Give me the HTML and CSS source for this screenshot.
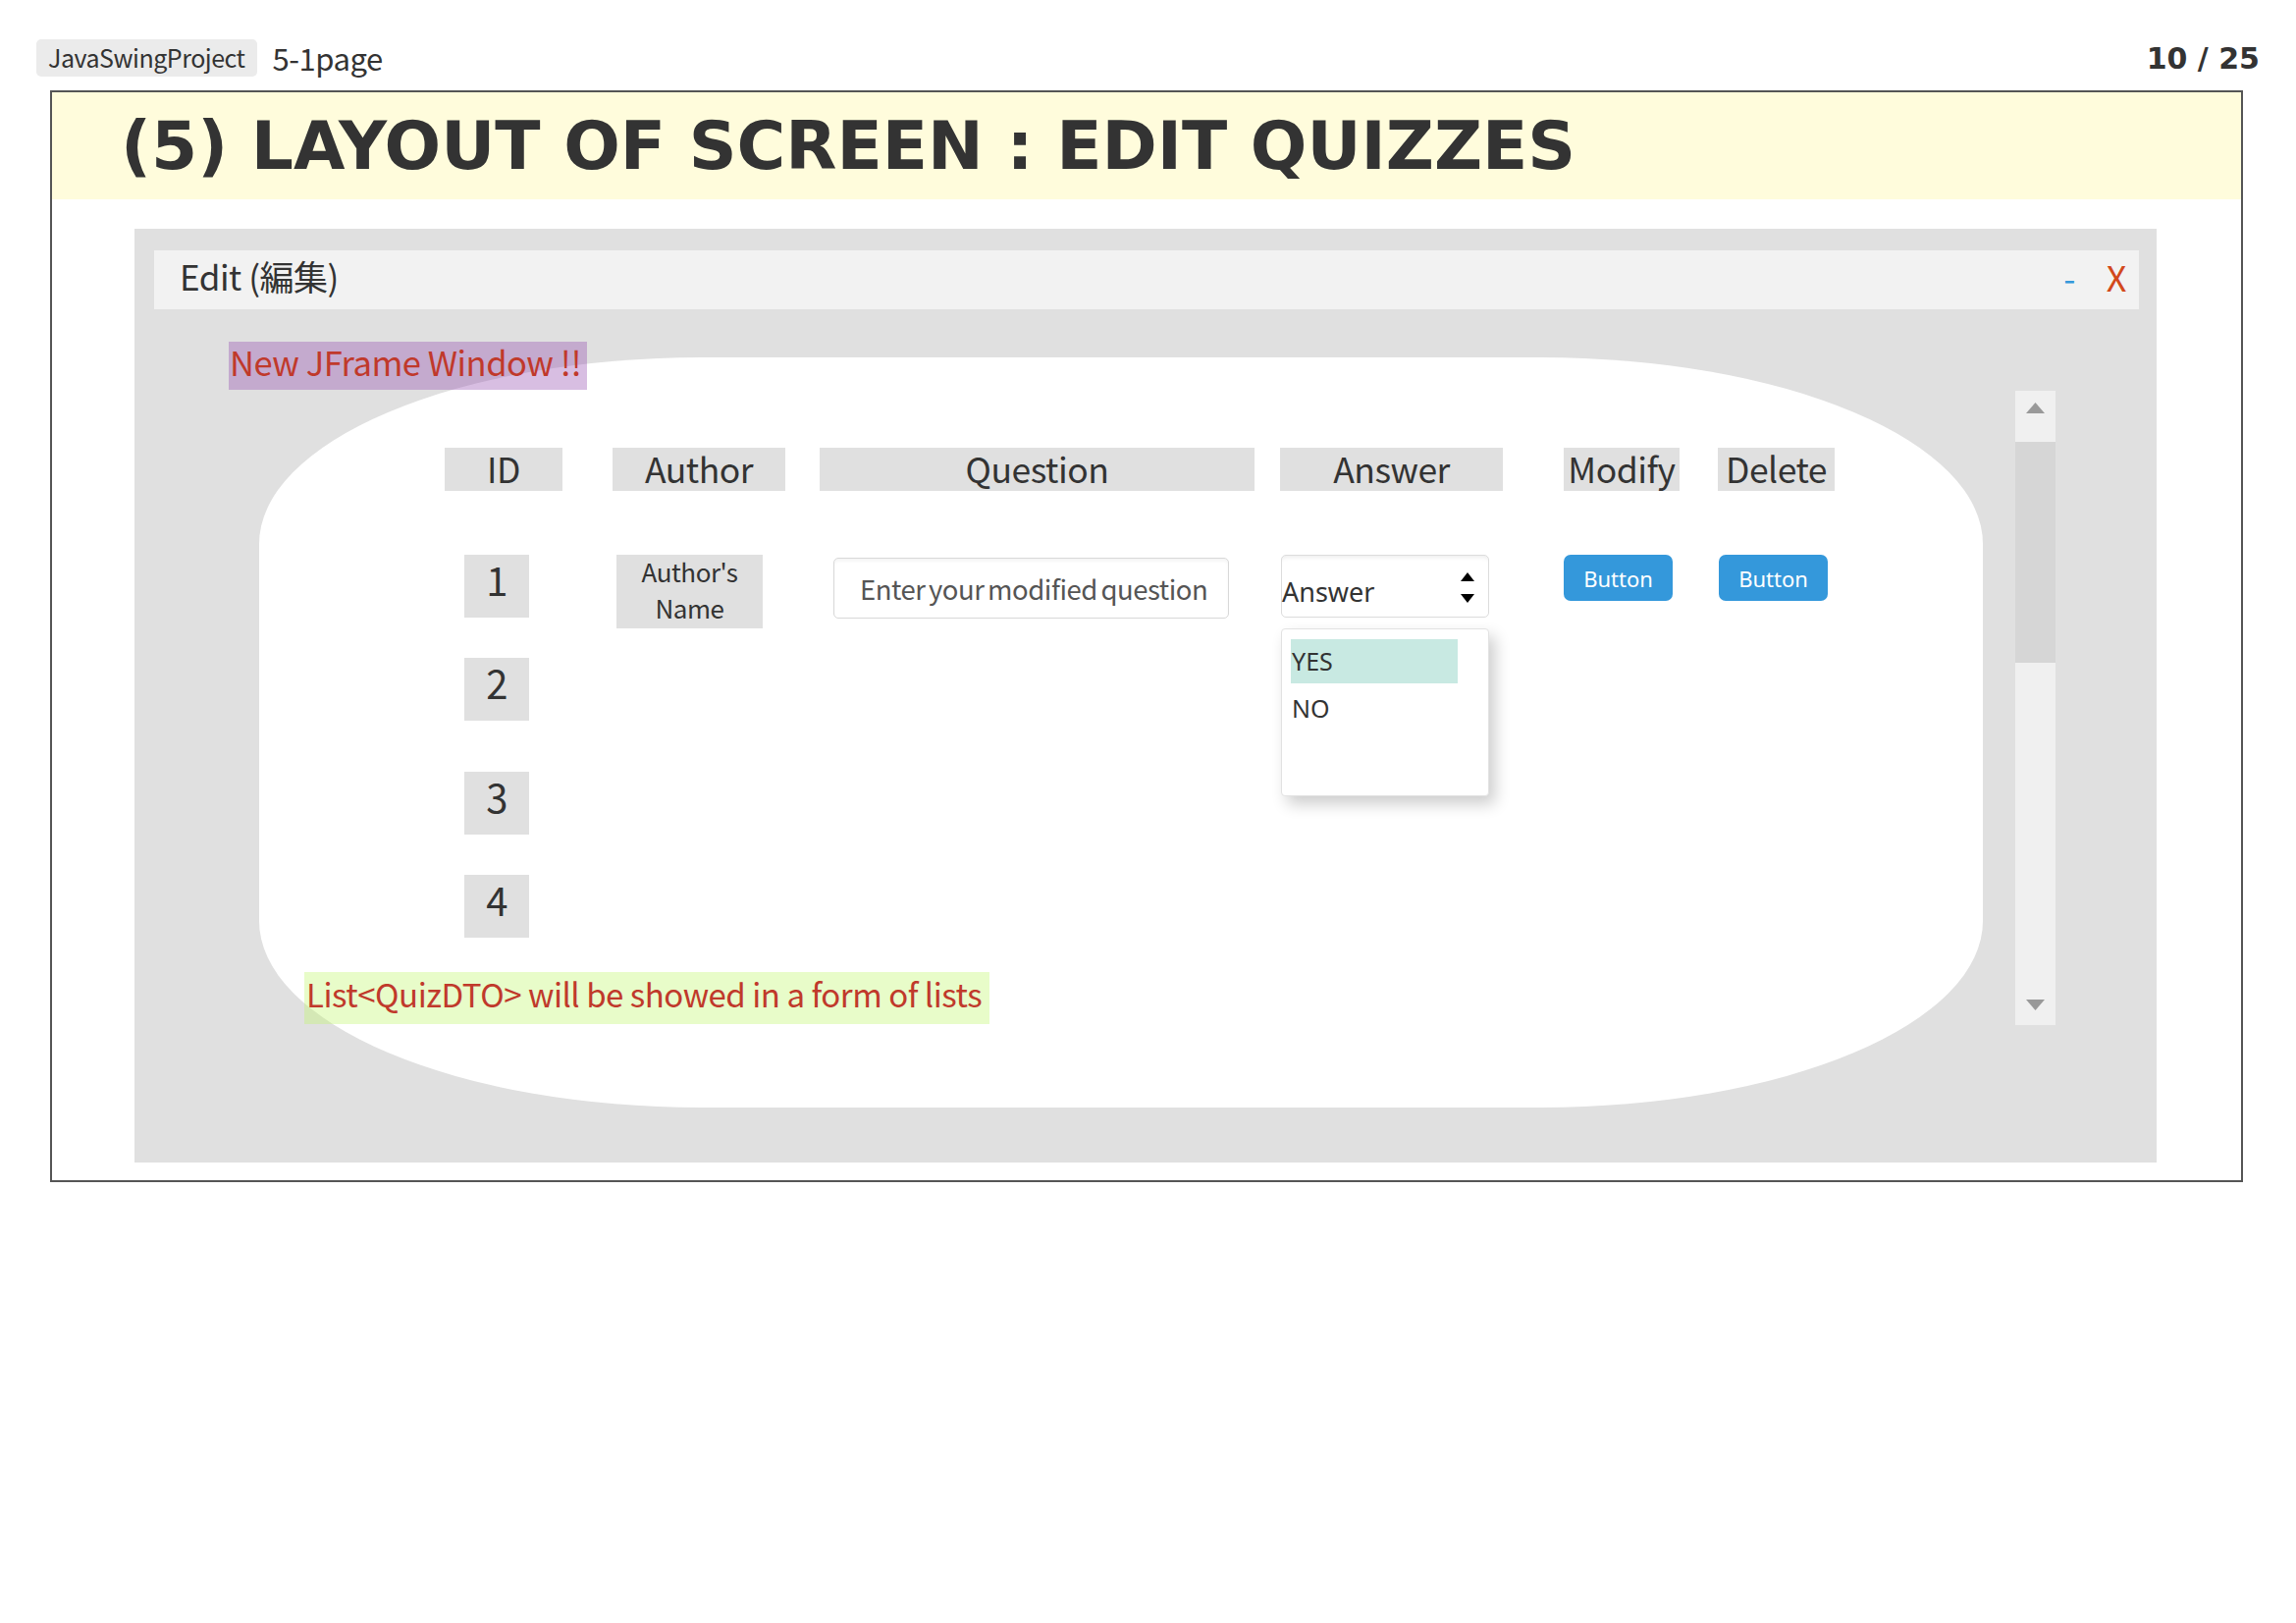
FILE: index.html
```html
<!DOCTYPE html>
<html lang="en">
<head>
    <meta charset="UTF-8">
    <meta name="viewport" content="width=device-width, initial-scale=1.0">
    <title>JavaSwingProject - 5-1page</title>
    <link rel="stylesheet" href="styles.css">
</head>
<body>

<div class="page">
    <header class="topbar">
        <div class="crumbs">
            <span class="tag">JavaSwingProject</span>
            <span class="pagename">5-1page</span>
        </div>
        <div class="pager">10 / 25</div>
    </header>

    <section class="slide">
        <h1 class="slide-title">(5) LAYOUT OF SCREEN : EDIT QUIZZES</h1>

        <div class="frame">
            <div class="titlebar">
                <span>Edit (編集)</span>
                <span class="win-btns"><span class="min">-</span><span class="close">X</span></span>
            </div>

            <div class="frame-body">
                <span class="note note-purple">New JFrame Window !!</span>

                <div class="sheet">
                    <div class="grid">
                        <div class="head head-id">ID</div>
                        <div class="head head-author">Author</div>
                        <div class="head head-question">Question</div>
                        <div class="head head-answer">Answer</div>
                        <div class="head head-modify">Modify</div>
                        <div class="head head-delete">Delete</div>

                        <div class="id-cell">1</div>
                        <div class="author-cell"><span>Author's</span><span>Name</span></div>
                        <input type="text" class="question-input" placeholder="Enter your modified question">
                        <div class="answer-cell">
                            <div class="select">
                                <span class="select-value">Answer</span>
                                <svg class="select-arrows" width="14" height="31" viewBox="0 0 14 31">
                                    <path d="M7 0L14 9H0Z" fill="#000"/>
                                    <path d="M0 22H14L7 31Z" fill="#000"/>
                                </svg>
                            </div>
                            <div class="options">
                                <div class="option selected">YES</div>
                                <div class="option">NO</div>
                            </div>
                        </div>
                        <button class="btn">Button</button>
                        <button class="btn btn-delete">Button</button>

                        <div class="id-cell">2</div>
                        <div class="id-cell">3</div>
                        <div class="id-cell">4</div>
                    </div>
                </div>

                <div class="scrollbar">
                    <div class="scroll-btn">
                        <svg width="19" height="11" viewBox="0 0 19 11"><path d="M9.5 0L19 11H0Z" fill="#999"/></svg>
                    </div>
                    <div class="thumb"></div>
                    <div class="track">
                        <svg width="19" height="11" viewBox="0 0 19 11"><path d="M0 0H19L9.5 11Z" fill="#999"/></svg>
                    </div>
                </div>

                <span class="note note-green">List&lt;QuizDTO&gt; will be showed in a form of lists</span>
            </div>
        </div>
    </section>
</div>

</body>
</html>
```

FILE: styles.css
```css
body {
    margin: 0;
    font-family: "Noto Sans CJK JP", "Noto Sans", sans-serif;
    letter-spacing: -0.03em;
    color: #333;
    background-color: #fff;
}
.page {
    padding: 40px 37px 0 37px;
}
.topbar {
    display: flex;
    justify-content: space-between;
    align-items: center;
    height: 38px;
}
.crumbs {
    display: flex;
    align-items: center;
}
.tag {
    background-color: #ebebeb;
    border-radius: 5px;
    padding: 0 12px;
    height: 38px;
    line-height: 36px;
    font-size: 25px;
}
.pagename {
    margin-left: 16px;
    font-size: 31px;
    line-height: 34px;
}
.pager {
    font-family: "DejaVu Sans", sans-serif;
    font-weight: bold;
    font-size: 30px;
    letter-spacing: normal;
}
.slide {
    margin: 14px 17px 0 14px;
    border: 2px solid #555;
}
.slide-title {
    margin: 0;
    height: 109px;
    line-height: 109px;
    background-color: #fffcdc;
    padding-left: 70px;
    font-family: "DejaVu Sans", sans-serif;
    font-weight: bold;
    font-size: 67.8px;
    letter-spacing: normal;
    color: #333;
    white-space: nowrap;
}
.frame {
    margin: 30px 86px 18px 84px;
    background-color: #e0e0e0;
    padding: 22px 18px 0 20px;
}
.titlebar {
    height: 60px;
    box-sizing: border-box;
    background-color: #f2f2f2;
    display: flex;
    align-items: center;
    justify-content: space-between;
    padding: 0 13px 8px 26px;
    font-size: 35px;
    line-height: 52px;
}
.win-btns .min {
    color: #3498db;
    margin-right: 32px;
}
.win-btns .close {
    color: #d2491b;
    font-size: 36px;
}
.frame-body {
    position: relative;
    display: flex;
    align-items: flex-start;
    padding: 49px 0 56px 107px;
}
.sheet {
    width: 1756px;
    height: 764px;
    box-sizing: border-box;
    background-color: #fff;
    border-radius: 450px / 190px;
    padding: 92px 0 0 189px;
}
.grid {
    display: grid;
    grid-template-columns: 171px 211px 469px 289px 157px 119px;
    grid-template-rows: 109px 105px 116px 105px 64px;
    align-items: start;
}
.head {
    height: 44px;
    line-height: 42px;
    background-color: #e0e0e0;
    text-align: center;
    font-size: 35.5px;
}
.head-id { width: 120px; }
.head-author { width: 176px; }
.head-question { width: 443px; }
.head-answer { width: 227px; }
.head-modify { width: 118px; }
.head-delete { width: 119px; }
.id-cell {
    grid-column: 1;
    margin-left: 20px;
    width: 66px;
    height: 64px;
    line-height: 50px;
    background-color: #e0e0e0;
    text-align: center;
    font-size: 40px;
}
.author-cell {
    margin-left: 4px;
    width: 149px;
    height: 75px;
    box-sizing: border-box;
    padding-bottom: 5px;
    background-color: #e0e0e0;
    font-size: 26px;
    line-height: 37px;
    display: flex;
    flex-direction: column;
    justify-content: center;
    align-items: center;
}
.question-input {
    margin: 3px 0 0 14px;
    width: 403px;
    height: 62px;
    box-sizing: border-box;
    border: 1px solid #d8d8d8;
    border-radius: 5px;
    padding: 0 0 0 26px;
    font-family: inherit;
    font-size: 27.5px;
    letter-spacing: inherit;
    word-spacing: -2px;
    color: #333;
    box-shadow: inset 0 3px 3px rgba(0, 0, 0, 0.04);
    outline: none;
}
.question-input::placeholder {
    color: #555;
    opacity: 1;
}
.answer-cell {
    position: relative;
    margin-left: 1px;
    width: 212px;
}
.select {
    height: 64px;
    box-sizing: border-box;
    border: 1px solid #dcdcdc;
    border-radius: 5px;
    display: flex;
    justify-content: space-between;
    padding: 0 14px 12px 0;
    box-shadow: inset 0 5px 4px -3px rgba(0, 0, 0, 0.07);
    font-family: "Noto Sans", sans-serif;
    font-size: 27px;
    line-height: 27px;
    letter-spacing: normal;
}
.select-value {
    align-self: flex-end;
}
.select-arrows {
    margin-top: 17px;
}
.options {
    position: absolute;
    top: 75px;
    left: 0;
    width: 212px;
    height: 171px;
    box-sizing: border-box;
    background-color: #fff;
    border: 1px solid #e2e2e2;
    border-radius: 4px;
    box-shadow: 6px 8px 16px rgba(0, 0, 0, 0.2);
    padding: 10px 0 0 9px;
    font-family: "Noto Sans", sans-serif;
    font-size: 25px;
    letter-spacing: normal;
}
.option {
    width: 170px;
    height: 45px;
    line-height: 45px;
    margin-bottom: 3px;
    padding-left: 1px;
    box-sizing: border-box;
}
.option.selected {
    background-color: #c8e9e2;
}
.btn {
    border: none;
    border-radius: 7px;
    background-color: #3498db;
    color: #fff;
    width: 111px;
    height: 47px;
    padding: 0;
    font-family: "Noto Sans", sans-serif;
    font-size: 22px;
}
.btn-delete {
    margin-left: 1px;
}
.scrollbar {
    margin: 34px 0 0 33px;
    width: 41px;
    height: 646px;
    background-color: #f0f0f0;
    display: flex;
    flex-direction: column;
}
.scroll-btn {
    height: 52px;
    box-sizing: border-box;
    padding-top: 12px;
    display: flex;
    justify-content: center;
}
.thumb {
    height: 225px;
    background-color: #d6d6d6;
}
.track {
    flex: 1;
    display: flex;
    align-items: flex-end;
    justify-content: center;
    padding-bottom: 15px;
}
.note {
    position: absolute;
    color: #c0392b;
    white-space: nowrap;
    box-sizing: border-box;
}
.note-purple {
    left: 76px;
    top: 33px;
    height: 49px;
    line-height: 41px;
    padding: 0 6px 8px 1px;
    font-size: 34.5px;
    background-color: rgba(142, 68, 173, 0.35);
}
.note-green {
    left: 153px;
    top: 675px;
    height: 53px;
    line-height: 45px;
    padding: 0 8px 8px 2px;
    font-size: 33px;
    background-color: rgba(190, 245, 100, 0.35);
}
```
